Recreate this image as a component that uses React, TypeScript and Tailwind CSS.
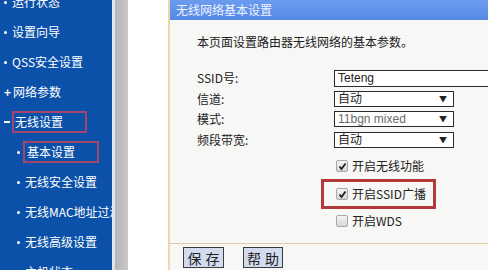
import React from 'react';

const cjk = { fontFamily: '"Noto Sans CJK SC", "Liberation Sans", sans-serif' };

type NavItem = { label: string; mark: 'dot' | 'plus' | 'minus'; sub?: boolean; boxed?: boolean };

const navItems: NavItem[] = [
  { label: '运行状态', mark: 'dot' },
  { label: '设置向导', mark: 'dot' },
  { label: 'QSS安全设置', mark: 'dot' },
  { label: '网络参数', mark: 'plus' },
  { label: '无线设置', mark: 'minus', boxed: true },
  { label: '基本设置', mark: 'dot', sub: true, boxed: true },
  { label: '无线安全设置', mark: 'dot', sub: true },
  { label: '无线MAC地址过滤', mark: 'dot', sub: true },
  { label: '无线高级设置', mark: 'dot', sub: true },
  { label: '主机状态', mark: 'dot', sub: true },
];

function Mark({ kind }: { kind: NavItem['mark'] }) {
  if (kind === 'plus') return <span className="mr-[1px] w-[8px] shrink-0 text-[12px] font-bold leading-none text-white">+</span>;
  if (kind === 'minus') return <span className="mr-[3px] block h-[2px] w-[6px] shrink-0 bg-white" />;
  return <span className="mr-[5px] block h-[3px] w-[3px] shrink-0 rounded-full bg-white" />;
}

function Sidebar() {
  return (
    <div className="w-[112px] shrink-0 overflow-hidden bg-[#0b51a9]" style={cjk}>
      <div className="-mt-[13px] flex flex-col">
        {navItems.map((item) => (
          <div key={item.label} className={`flex h-[30px] items-center whitespace-nowrap ${item.sub ? 'pl-[17px]' : 'pl-[4px]'}`}>
            <Mark kind={item.mark} />
            <span
              className={`shrink-0 text-[12px] leading-none text-white ${
                item.boxed ? (item.sub ? '-ml-[2px] border-2 border-[#a5456f] py-[3px] pl-[2px] pr-[22px]' : '-ml-[1px] border-2 border-[#a5456f] py-[3px] pl-[1px] pr-[22px]') : ''
              }`}
            >
              {item.label}
            </span>
          </div>
        ))}
      </div>
    </div>
  );
}

function Select({ value, muted }: { value: string; muted?: boolean }) {
  return (
    <div className="flex h-[16px] w-[120px] items-center justify-between border border-[#2b2b2b] bg-white pl-[3px] pr-[6px]">
      <span className={`text-[12px] leading-none ${muted ? 'text-[#6a6a6a]' : 'text-[#222]'}`} style={{ fontFamily: '"Liberation Sans", "Noto Sans CJK SC", sans-serif' }}>
        {value}
      </span>
      <span className="text-[8px] leading-none text-[#222]">▼</span>
    </div>
  );
}

function Check({ checked, label }: { checked: boolean; label: string }) {
  return (
    <div className="flex items-center gap-[4px]">
      <span className="flex h-[12px] w-[12px] items-center justify-center rounded-[2px] border border-[#a8a8a8] bg-gradient-to-b from-[#f4f4f4] to-[#d8d8d8]">
        {checked && (
          <svg width="9" height="9" viewBox="0 0 9 9">
            <path d="M1.5 4.5 L3.5 7 L7.5 1.5" fill="none" stroke="#222" strokeWidth="1.8" />
          </svg>
        )}
      </span>
      <span className="text-[12px] leading-none text-[#222]">{label}</span>
    </div>
  );
}

function Row({ label, children }: { label: string; children: React.ReactNode }) {
  return (
    <div className="flex h-[20.5px] items-center">
      <span className="w-[137px] text-[12px] leading-none text-[#222]">{label}</span>
      {children}
    </div>
  );
}

export default function App() {
  return (
    <div className="flex h-[270px] w-[488px] overflow-hidden bg-white">
      <Sidebar />
      <div className="w-[3px] shrink-0 bg-[#dde5ee]" />
      <div className="w-[13px] shrink-0 bg-gradient-to-r from-[#b5b5b5] to-[#c9c9c9]" />
      <div className="w-[40px] shrink-0 bg-white" />

      <div className="flex flex-1 flex-col border-l-2 border-[#efd5ad] bg-[#f7f7f6]" style={cjk}>
        <div className="flex h-[20px] shrink-0 items-center bg-gradient-to-b from-[#6b9cf0] to-[#5689e6] pl-[6px]">
          <span className="text-[12px] leading-none text-[#eef3ff]">无线网络基本设置</span>
        </div>

        <div className="flex flex-1 flex-col pl-[27px] pt-[16px]">
          <p className="text-[12px] leading-none text-[#222]">本页面设置路由器无线网络的基本参数。</p>

          <div className="mt-[20px] flex flex-col">
            <Row label="SSID号:">
              <div className="flex h-[17px] flex-1 items-center border border-r-0 border-[#2b2b2b] bg-white pl-[3px]">
                <span className="text-[12px] leading-none text-[#222]" style={{ fontFamily: '"Liberation Sans", sans-serif' }}>Teteng</span>
              </div>
            </Row>
            <Row label="信道:">
              <Select value="自动" />
            </Row>
            <Row label="模式:">
              <Select value="11bgn mixed" muted />
            </Row>
            <Row label="频段带宽:">
              <Select value="自动" />
            </Row>
          </div>

          <div className="ml-[139px] mt-[10px] flex flex-col">
            <Check checked label="开启无线功能" />
            <div className="-ml-[15px] mt-[7px] w-[115px] border-[3px] border-[#b33a3a] py-[6px] pl-[12px]">
              <Check checked label="开启SSID广播" />
            </div>
            <div className="mt-[6px]">
              <Check checked={false} label="开启WDS" />
            </div>
          </div>
        </div>

        <div className="flex h-[27px] shrink-0 items-center gap-[19px] border-t border-[#e4c9a3] pl-[13px] pt-[1px]">
          <button className="flex h-[21px] w-[41px] items-center justify-center whitespace-nowrap border border-[#3c3c3c] bg-[#d3dbee] text-[14px] leading-none text-[#222]">
            保<span className="w-[4px]" />存
          </button>
          <button className="flex h-[21px] w-[40px] items-center justify-center whitespace-nowrap border border-[#3c3c3c] bg-[#d3dbee] text-[14px] leading-none text-[#222]">
            帮<span className="w-[4px]" />助
          </button>
        </div>
      </div>
    </div>
  );
}
